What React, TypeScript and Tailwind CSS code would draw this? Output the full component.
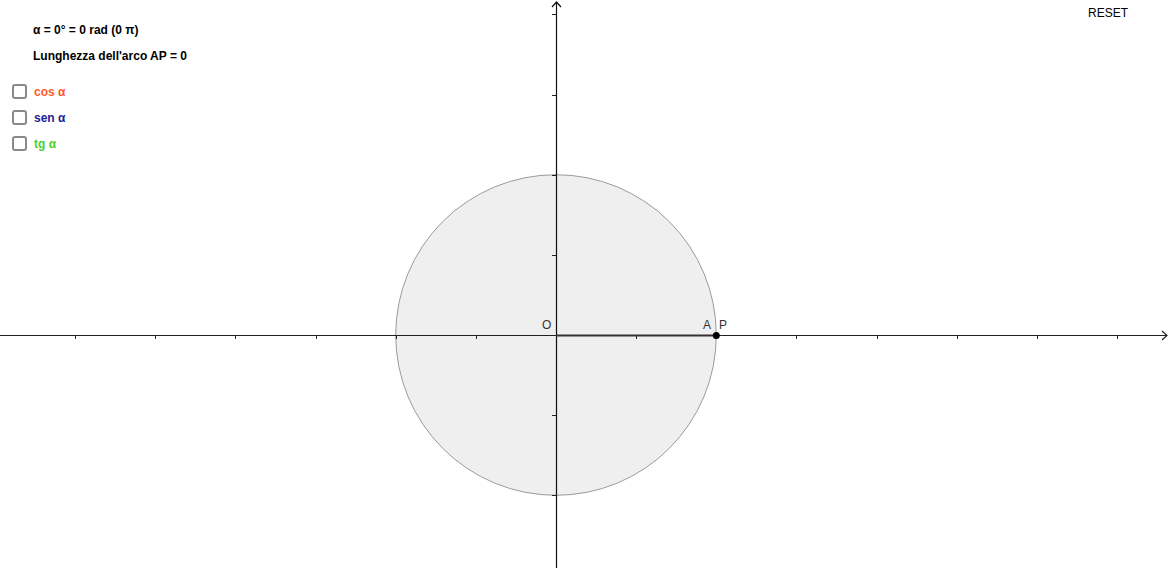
import React from 'react';

const OX = 556;
const OY = 335;
const UNIT = 80.15;

const options = [
    { label: 'cos α', color: 'text-[#ff5a28]' },
    { label: 'sen α', color: 'text-[#1e1e96]' },
    { label: 'tg α', color: 'text-[#4cd22a]' },
];

function Plane() {
    const xTicks = [-6, -5, -4, -3, -2, -1, 1, 2, 3, 4, 5, 6, 7];
    const yTicks = [-2, -1, 1, 2, 3, 4];
    return (
        <svg width="1170" height="568" viewBox="0 0 1170 568" className="block">
            {/* unit circle, radius 2 */}
            <circle cx={OX} cy={OY} r={UNIT * 2} fill="#efefef" stroke="#9a9a9a" strokeWidth="1" />

            {/* axes */}
            <line x1="0" y1={OY + 0.5} x2="1167" y2={OY + 0.5} stroke="#222" strokeWidth="1.2" />
            <polyline points={`1162,${OY - 4} 1167,${OY + 0.5} 1162,${OY + 5}`} fill="none" stroke="#222" strokeWidth="1.2" />
            <line x1={OX + 0.5} y1="2" x2={OX + 0.5} y2="568" stroke="#111" strokeWidth="1.2" />
            <polyline points={`${OX - 4},7 ${OX + 0.5},2 ${OX + 5},7`} fill="none" stroke="#111" strokeWidth="1.2" />

            {xTicks.map(k => (
                <line key={`x${k}`} x1={Math.round(OX + k * UNIT) + 0.5} y1={OY} x2={Math.round(OX + k * UNIT) + 0.5} y2={OY + 4} stroke="#222" strokeWidth="1" />
            ))}
            {yTicks.map(k => (
                <line key={`y${k}`} x1={OX - 4} y1={Math.round(OY - k * UNIT) + 0.5} x2={OX} y2={Math.round(OY - k * UNIT) + 0.5} stroke="#222" strokeWidth="1" />
            ))}

            {/* segment OA */}
            <line x1={OX} y1={OY + 0.5} x2={OX + UNIT * 2} y2={OY + 0.5} stroke="#333" strokeWidth="2" />
            <circle cx={OX + UNIT * 2} cy={OY + 0.5} r="3.5" fill="#000" />

            <g fontFamily="'Liberation Sans', Arial, sans-serif" fontSize="12" fill="#333">
                <text x={542} y={329}>O</text>
                <text x={703} y={329}>A</text>
                <text x={719} y={329}>P</text>
            </g>
        </svg>
    );
}

export default function App() {
    return (
        <div className="relative w-[1170px] h-[568px] overflow-hidden bg-white font-['Liberation_Sans',Arial,sans-serif] text-black">
            <Plane />

            <div className="absolute left-0 top-0 pt-[23px]">
                <div className="pl-[33px] text-[12px] font-bold leading-[14px]">α = 0° = 0 rad (0 π)</div>
                <div className="pl-[33px] mt-[12px] text-[12px] font-bold leading-[14px]">Lunghezza dell'arco AP = 0</div>
                <div className="mt-[21px] flex flex-col gap-[11px] pl-[12px]">
                    {options.map(o => (
                        <label key={o.label} className="flex items-center gap-[7px] h-[15px]">
                            <span className="w-[15px] h-[15px] rounded-[3px] border-2 border-[#8a8a8a] bg-white" />
                            <span className={`text-[12px] font-bold leading-[14px] ${o.color}`}>{o.label}</span>
                        </label>
                    ))}
                </div>
            </div>

            <div className="absolute right-[42px] top-[6px] text-[12px] leading-[14px] text-black">RESET</div>
        </div>
    );
}
